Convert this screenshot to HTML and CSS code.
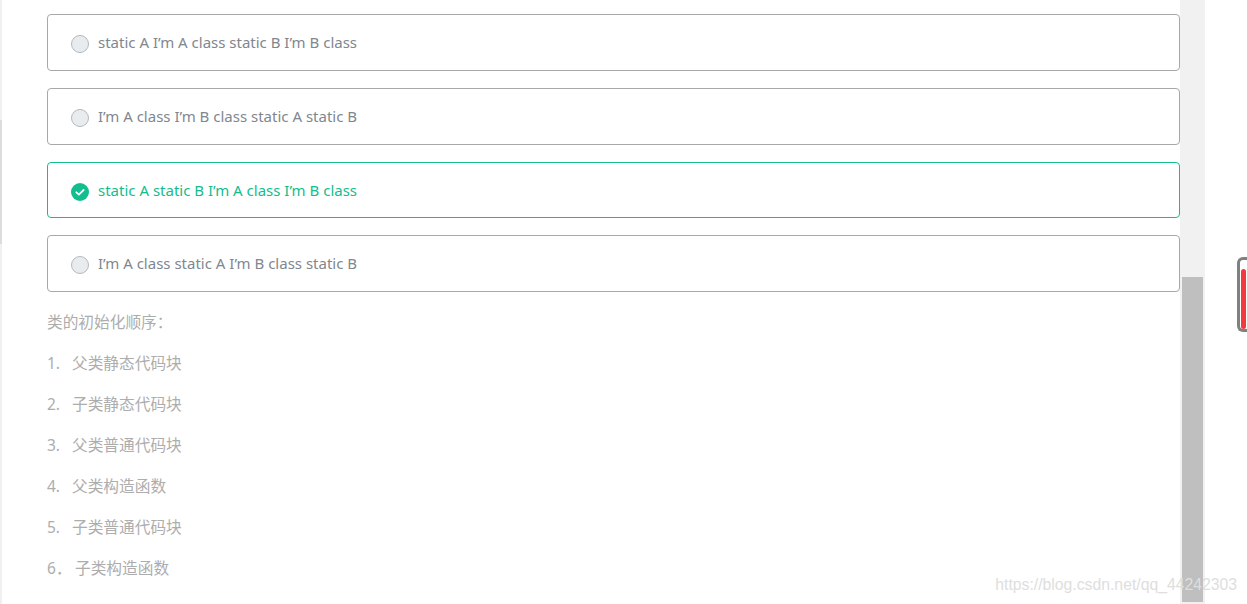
FILE: index.html
```html
<!DOCTYPE html>
<html lang="zh-CN">
<head>
  <meta charset="UTF-8">
  <meta name="viewport" content="width=device-width, initial-scale=1.0">
  <title>类的初始化顺序</title>
  <link rel="stylesheet" href="styles.css">
</head>
<body>
  <div class="page">
    <div class="edge"><div class="edge-thumb"></div></div>
    <main class="content">
      <div class="options">
        <label class="option"><span class="radio"></span>static A I’m A class static B I’m B class</label>
        <label class="option"><span class="radio"></span>I’m A class I’m B class static A static B</label>
        <label class="option selected">
          <span class="radio">
            <svg viewBox="0 0 18 18" width="18" height="18"><path d="M5.4 9.3l2.5 2.3 4.7-4.6" fill="none" stroke="#fff" stroke-width="1.8" stroke-linecap="round" stroke-linejoin="round"/></svg>
          </span>static A static B I’m A class I’m B class</label>
        <label class="option"><span class="radio"></span>I’m A class static A I’m B class static B</label>
      </div>
      <div class="analysis">
        <p>类的初始化顺序：</p>
        <p><span class="num">1.</span>父类静态代码块</p>
        <p><span class="num">2.</span>子类静态代码块</p>
        <p><span class="num">3.</span>父类普通代码块</p>
        <p><span class="num">4.</span>父类构造函数</p>
        <p><span class="num">5.</span>子类普通代码块</p>
        <p><span class="num wide">6．</span>子类构造函数</p>
      </div>
    </main>
    <div class="scrollbar"><div class="scroll-thumb"></div></div>
    <aside class="side"><div class="pill"><div class="pill-bar"></div></div></aside>
  </div>
  <div class="watermark">https://blog.csdn.net/qq_44242303</div>
</body>
</html>
```

FILE: styles.css
```css
* { box-sizing: border-box; }
html, body {
  margin: 0;
  height: 604px;
  overflow: hidden;
  background: #fff;
}
body {
  position: relative;
  font-family: "Noto Sans", "Noto Sans CJK SC", sans-serif;
}
.page {
  display: flex;
  height: 604px;
}
.edge {
  flex: none;
  width: 2px;
  background: #f0f0f0;
  padding-top: 120px;
}
.edge-thumb {
  height: 124px;
  background: #dcdcdc;
}
.content {
  flex: none;
  width: 1178px;
  padding: 14px 0 0 45px;
}
.options {
  display: flex;
  flex-direction: column;
  gap: 17px;
}
.option {
  display: flex;
  align-items: center;
  height: 57px;
  padding: 0 0 1px 23px;
  border: 1px solid #a8a8a8;
  border-radius: 4px;
  font-size: 15px;
  color: #80878f;
}
.option.selected {
  height: 56px;
  padding-bottom: 0;
  border-color: #12bd8e;
  color: #12bd8e;
}
.radio {
  flex: none;
  width: 18px;
  height: 18px;
  margin: 4px 9px 0 0;
  border: 1px solid #b4bac0;
  border-radius: 50%;
  background: #e9ecef;
}
.selected .radio {
  border: 0;
  background: #12bd8e;
}
.radio svg { display: block; }
.analysis {
  padding-top: 18px;
  font-family: "Noto Sans CJK SC", sans-serif;
  font-size: 15.7px;
  color: #adadad;
}
.analysis p {
  margin: 0 0 18px;
  height: 23px;
  line-height: 23px;
}
.num {
  display: inline-block;
  width: 25px;
  font-family: "Noto Sans", sans-serif;
  font-size: 15.5px;
}
.num.wide { width: 28px; }
.scrollbar {
  flex: none;
  width: 25px;
  padding: 277px 2px 2px;
  background: #f1f1f1;
}
.scroll-thumb {
  height: 100%;
  background: #bfbfbf;
}
.side {
  flex: none;
  width: 42px;
  padding: 257px 0 0 32px;
  overflow: hidden;
}
.pill {
  width: 11px;
  height: 75px;
  padding: 9px 0 0 1px;
  border: 3px solid #808080;
  border-right: 0;
  border-radius: 6px 0 0 6px;
}
.pill-bar {
  width: 5px;
  height: 60px;
  border-radius: 3px;
  background: #f03a3e;
}
.watermark {
  position: absolute;
  right: 10px;
  top: 575px;
  font-family: "Liberation Sans", sans-serif;
  font-size: 15.75px;
  line-height: 20px;
  color: #dedede;
}
```
